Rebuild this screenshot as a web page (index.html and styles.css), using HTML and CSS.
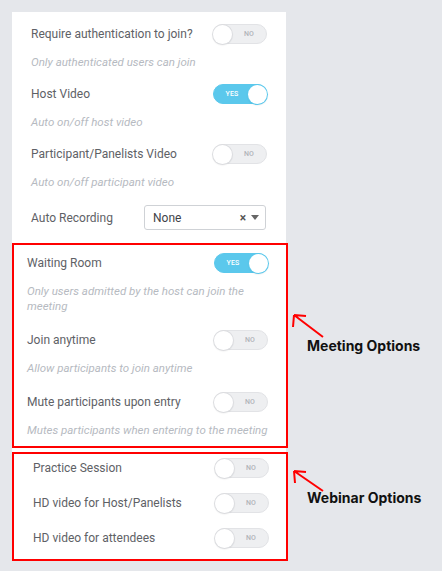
FILE: index.html
```html
<!DOCTYPE html>
<html>
<head>
<meta charset="utf-8">
<link rel="stylesheet" href="styles.css">
</head>
<body>
<div class="page">
  <div class="panel">
    <section class="top">
      <div class="opt">
        <div class="row"><span class="label">Require authentication to join?</span><span class="tg"><span class="knob"></span><span class="tg-text">NO</span></span></div>
        <p class="hint">Only authenticated users can join</p>
      </div>
      <div class="opt">
        <div class="row"><span class="label">Host Video</span><span class="tg on"><span class="tg-text">YES</span><span class="knob"></span></span></div>
        <p class="hint">Auto on/off host video</p>
      </div>
      <div class="opt opt-last">
        <div class="row"><span class="label">Participant/Panelists Video</span><span class="tg"><span class="knob"></span><span class="tg-text">NO</span></span></div>
        <p class="hint">Auto on/off participant video</p>
      </div>
      <div class="row select-row">
        <span class="label">Auto Recording</span>
        <div class="select"><span class="sel-val">None</span><span class="clear">×</span><span class="caret"></span></div>
      </div>
    </section>

    <section class="box meeting">
      <div class="opt">
        <div class="row"><span class="label">Waiting Room</span><span class="tg on"><span class="tg-text">YES</span><span class="knob"></span></span></div>
        <p class="hint">Only users admitted by the host can join the meeting</p>
      </div>
      <div class="opt">
        <div class="row"><span class="label">Join anytime</span><span class="tg"><span class="knob"></span><span class="tg-text">NO</span></span></div>
        <p class="hint">Allow participants to join anytime</p>
      </div>
      <div class="opt">
        <div class="row"><span class="label">Mute participants upon entry</span><span class="tg"><span class="knob"></span><span class="tg-text">NO</span></span></div>
        <p class="hint nowrap">Mutes participants when entering to the meeting</p>
      </div>
    </section>

    <div class="spacer"></div>

    <section class="box webinar">
      <div class="row"><span class="label">Practice Session</span><span class="tg"><span class="knob"></span><span class="tg-text">NO</span></span></div>
      <div class="row"><span class="label">HD video for Host/Panelists</span><span class="tg"><span class="knob"></span><span class="tg-text">NO</span></span></div>
      <div class="row"><span class="label">HD video for attendees</span><span class="tg"><span class="knob"></span><span class="tg-text">NO</span></span></div>
    </section>
  </div>

  <div class="callout callout-meeting">
    <svg class="arrow" width="40" height="30" viewBox="0 0 40 30"><path d="M31 24 L2 2 M2 2 L14 3 M2 2 L1 14" fill="none" stroke="#ff0000" stroke-width="2"/></svg>
    <span class="callout-text">Meeting Options</span>
  </div>
  <div class="callout callout-webinar">
    <svg class="arrow" width="40" height="30" viewBox="0 0 40 30"><path d="M31 22 L2 2 M2 2 L14 3 M2 2 L3 14" fill="none" stroke="#ff0000" stroke-width="2"/></svg>
    <span class="callout-text">Webinar Options</span>
  </div>
</div>
</body>
</html>
```

FILE: styles.css
```css
* { box-sizing: border-box; }
html, body { margin: 0; padding: 0; }
body {
  background: #e5e7eb;
  font-family: Roboto, "Liberation Sans", sans-serif;
  width: 442px;
  height: 571px;
  overflow: hidden;
}
.page {
  position: relative;
  padding: 12px 0 0 12px;
}
.panel {
  width: 276px;
}
.top {
  background: #fff;
  width: 274px;
  padding: 12px 19px 13px 19px;
}
.opt { margin-bottom: 14px; }
.opt.opt-last { margin-bottom: 15px; }
.meeting .opt { margin-bottom: 16px; }
.meeting .opt:last-child { margin-bottom: 0; }
.row {
  display: flex;
  align-items: center;
  justify-content: space-between;
  height: 20px;
}
.label {
  font-size: 12px;
  color: #5e6166;
}
.hint {
  margin: 11px 0 0 0;
  font-size: 11.5px;
  line-height: 15px;
  font-style: italic;
  color: #b6bac1;
}
.hint.nowrap { white-space: nowrap; }

.tg {
  position: relative;
  display: flex;
  align-items: center;
  width: 54px;
  height: 20px;
  border-radius: 10px;
  background: #eeeff1;
  border: 1px solid #e2e3e6;
  flex-shrink: 0;
}
.tg .knob {
  width: 19px;
  height: 19px;
  margin-left: -1px;
  border-radius: 50%;
  background: #fff;
  box-shadow: 0 0 0 1px #dcdde0, 0 1px 2px rgba(0,0,0,0.12);
}
.tg .tg-text {
  flex: 1;
  text-align: center;
  font-size: 7px;
  font-weight: 500;
  color: #b0b3b8;
  letter-spacing: 0.2px;
}
.tg.on {
  background: #5bc8ec;
  border-color: #5bc8ec;
}
.tg.on .knob {
  margin-left: 0;
  margin-right: -1px;
  box-shadow: 0 0 0 1px #5bc8ec, 0 1px 2px rgba(0,0,0,0.15);
}
.tg.on .tg-text {
  color: #fff;
  padding-left: 2px;
}

.select-row { height: 25px; }
.select {
  display: flex;
  align-items: center;
  width: 122px;
  height: 25px;
  margin-right: 1px;
  border: 1px solid #cfd2d6;
  border-radius: 3px;
  padding: 0 6px 0 8px;
  background: #fff;
}
.sel-val {
  flex: 1;
  font-size: 12px;
  color: #3f4348;
}
.clear {
  font-size: 12px;
  color: #555;
  margin-right: 5px;
  font-weight: 700;
}
.caret {
  width: 0;
  height: 0;
  border-left: 4px solid transparent;
  border-right: 4px solid transparent;
  border-top: 5px solid #666;
}

.box {
  background: #fff;
  width: 276px;
  border: 2px solid #ff0000;
}
.meeting {
  padding: 8px 18px 8px 13px;
}
.spacer {
  width: 274px;
  height: 4px;
  background: #fff;
}
.webinar {
  padding: 4px 17px 11px 19px;
  display: flex;
  flex-direction: column;
  gap: 15px;
}

.callout {
  position: absolute;
  left: 292px;
}
.callout-meeting { top: 313px; }
.callout-webinar { top: 469px; }
.arrow { display: block; }
.callout-text {
  display: block;
  margin: -6px 0 0 15px;
  font-family: Inter, "Liberation Sans", sans-serif;
  font-weight: 700;
  font-size: 14px;
  color: #111;
}
.callout-webinar .callout-text { margin-top: -10px; }
```
